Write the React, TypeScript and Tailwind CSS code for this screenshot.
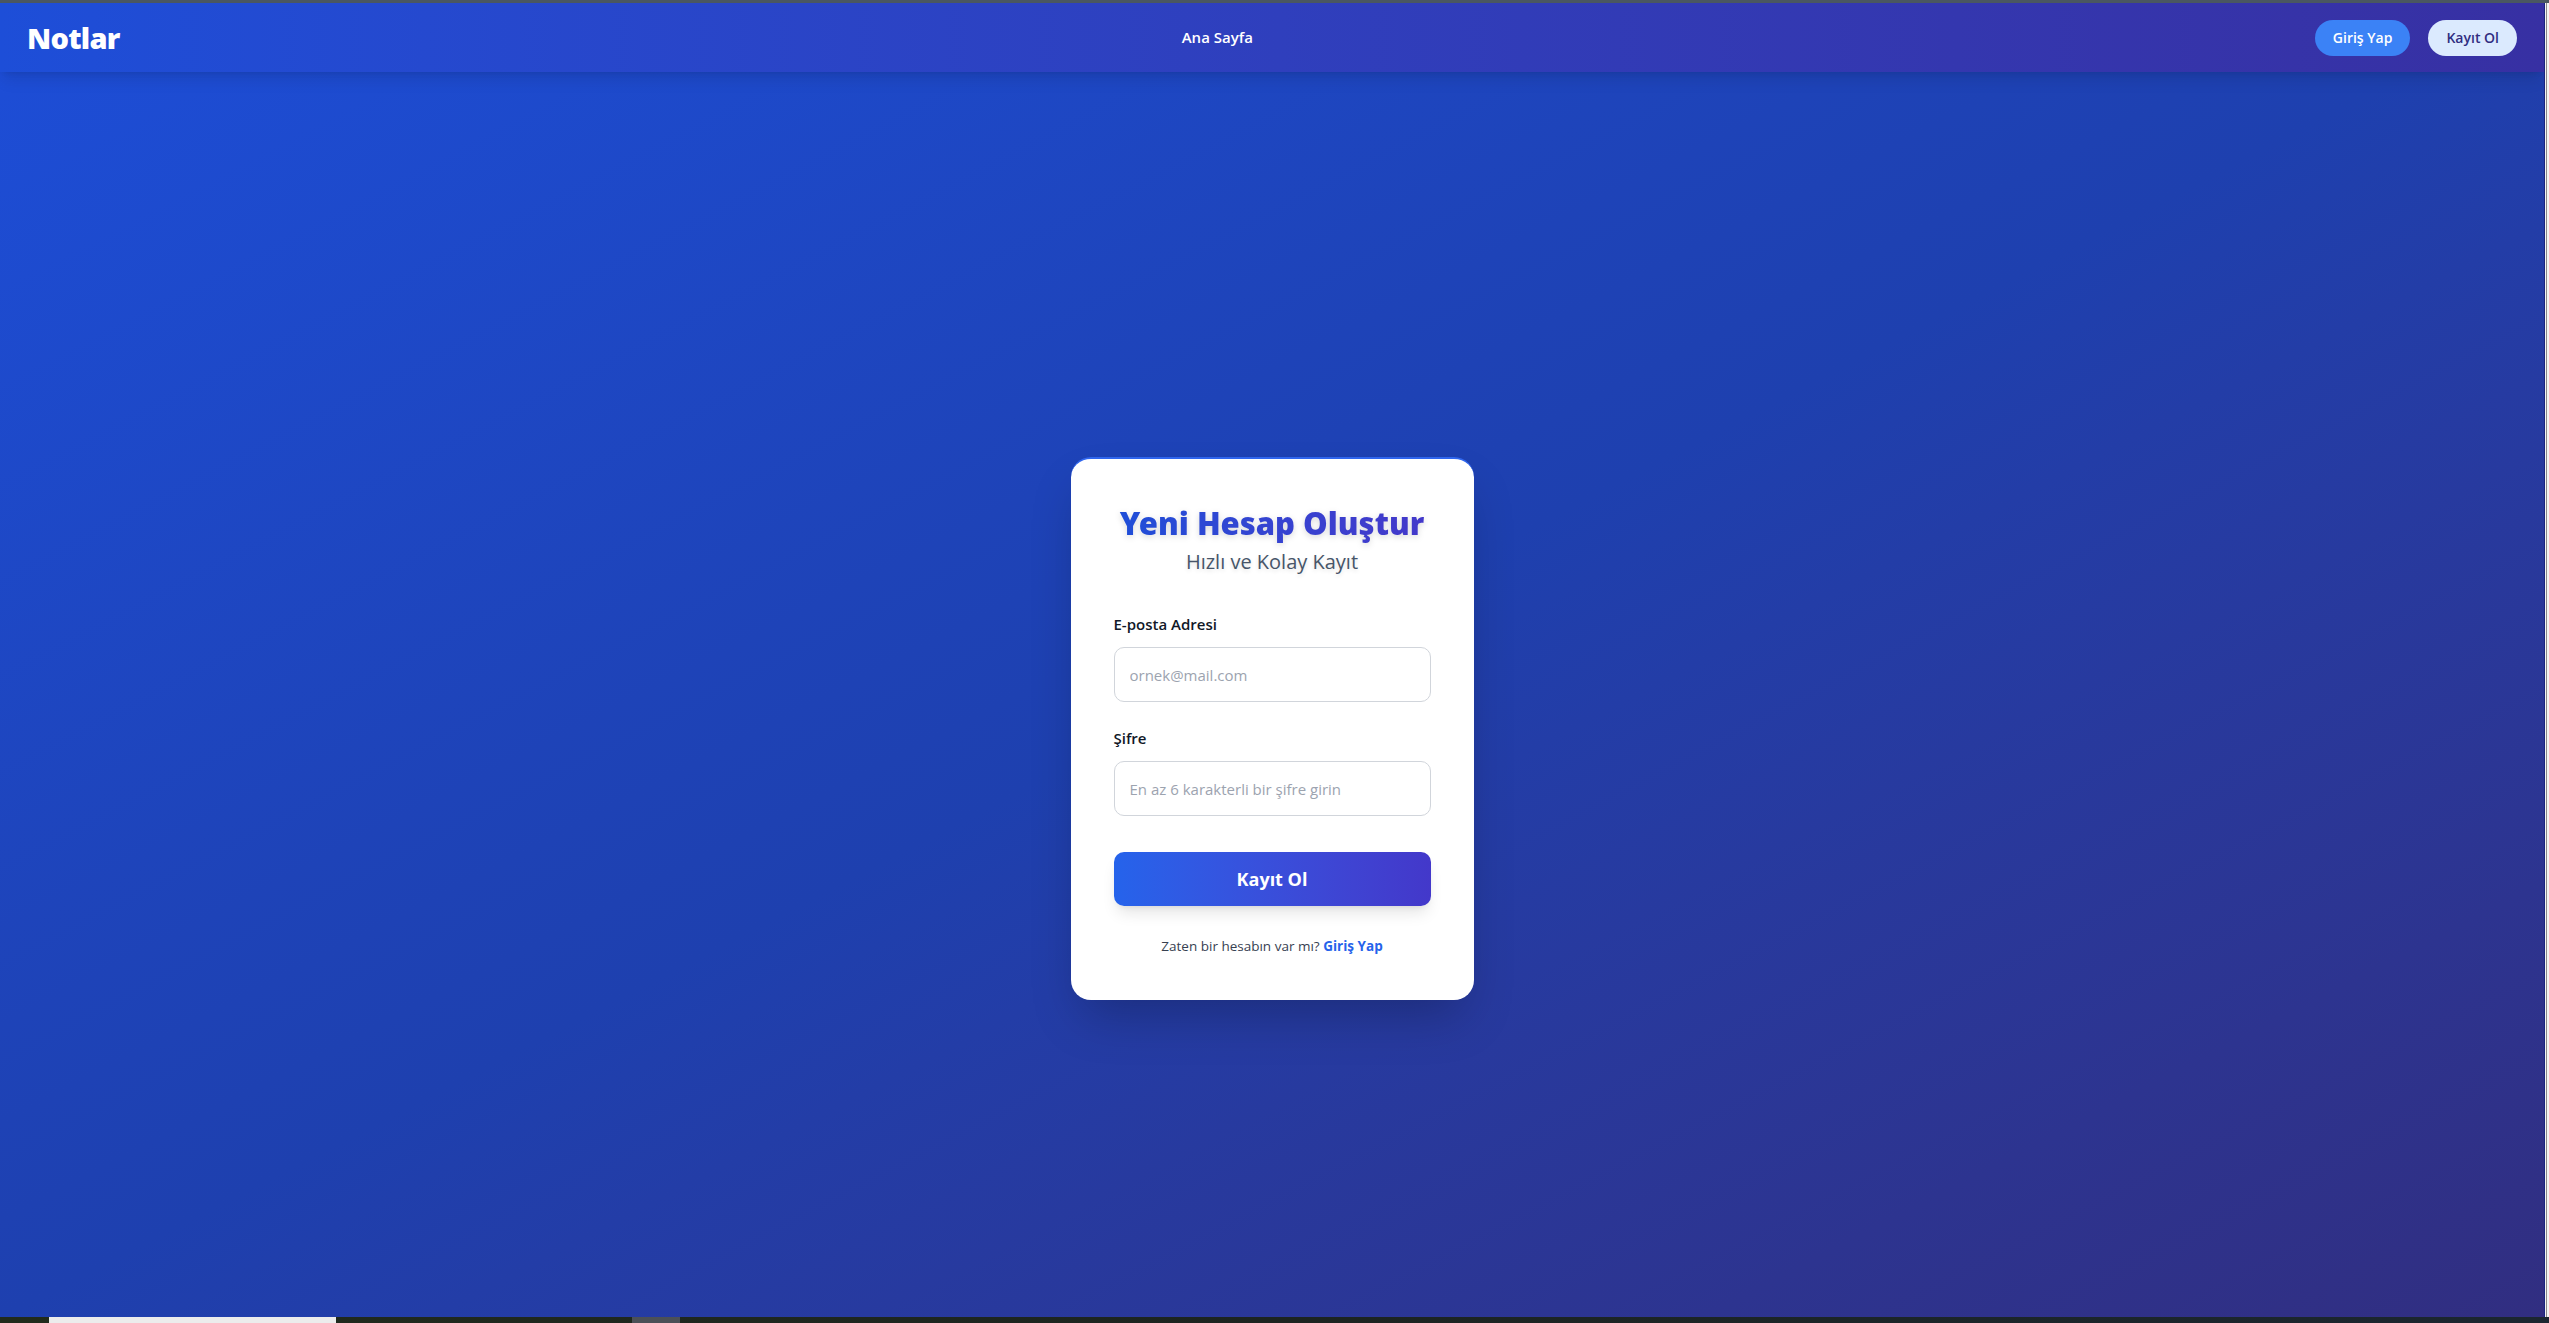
export default function App() {
  return (
    <div
      className="flex h-[1323px] w-[2549px] flex-col overflow-hidden bg-[#1b2520]"
      style={{ fontFamily: '"Open Sans", "Noto Sans", sans-serif' }}
    >
      {/* window chrome strip above the page */}
      <div className="h-[3px] shrink-0 bg-[#4a5761]" />

      <div className="flex min-h-0 flex-1">
        <div className="flex min-w-0 flex-1 flex-col overflow-hidden bg-gradient-to-br from-[#1d4ed8] via-[#1e40af] to-[#312e81]">
          <nav className="relative z-10 flex h-[69px] shrink-0 items-center justify-between bg-gradient-to-r from-[#1d4ed8] to-[#3730a3] px-[27px] shadow-lg">
            <span
              className="text-[29px] font-black tracking-tight text-white"
              style={{ fontFamily: '"Noto Sans", "Open Sans", sans-serif' }}
            >
              Notlar
            </span>
            <a href="/" className="text-[15px] font-semibold text-white">
              Ana Sayfa
            </a>
            <div className="flex items-center gap-[18px]">
              <button className="h-[36px] rounded-full bg-[#3b82f6] px-[18px] text-[14px] font-semibold text-white">
                Giriş Yap
              </button>
              <button className="h-[36px] rounded-full bg-[#dbeafe] px-[18px] text-[14px] font-semibold text-[#312e81]">
                Kayıt Ol
              </button>
            </div>
          </nav>

          <main className="flex h-[1313px] shrink-0 items-center justify-center">
            <div className="w-[403px] rounded-[20px] border-t-2 border-[#2f66ee] bg-white px-[43px] pb-[44px] pt-[44px] shadow-2xl">
              <div className="text-center">
                <h1
                  className="bg-gradient-to-r from-[#1d4ed8] to-[#4338ca] bg-clip-text text-[31px] font-black leading-[40px] text-transparent"
                  style={{ fontFamily: '"Noto Sans", "Open Sans", sans-serif', filter: "drop-shadow(0 2px 3px rgba(0,0,0,0.15))" }}
                >
                  Yeni Hesap Oluştur
                </h1>
                <p className="mt-[5px] text-[20px] leading-7 text-[#475569] [text-shadow:0_2px_4px_rgba(0,0,0,0.12)]">
                  Hızlı ve Kolay Kayıt
                </p>
              </div>

              <form className="mt-[38px]">
                <label className="block text-[15px] font-semibold leading-5 text-[#111827]">E-posta Adresi</label>
                <input
                  type="email"
                  placeholder="ornek@mail.com"
                  className="mt-[13px] block h-[55px] w-full rounded-[10px] border border-[#d1d5db] px-[15px] text-[15px] outline-none placeholder:text-[#9ca3af]"
                />

                <label className="mt-[26px] block text-[15px] font-semibold leading-5 text-[#111827]">Şifre</label>
                <input
                  type="password"
                  placeholder="En az 6 karakterli bir şifre girin"
                  className="mt-[13px] block h-[55px] w-full rounded-[10px] border border-[#d1d5db] px-[15px] text-[15px] outline-none placeholder:text-[#9ca3af]"
                />

                <button
                  type="button"
                  className="mt-[36px] block h-[54px] w-full rounded-[10px] bg-gradient-to-r from-[#2563eb] to-[#4338ca] text-[18px] font-bold text-white shadow-lg"
                >
                  Kayıt Ol
                </button>
              </form>

              <p className="mt-[30px] text-center text-[13.5px] leading-5 text-[#374151]">
                Zaten bir hesabın var mı?{" "}
                <a href="#" className="font-bold text-[#2563eb]">
                  Giriş Yap
                </a>
              </p>
            </div>
          </main>
        </div>

        {/* page scrollbar */}
        <div className="flex w-[5px] shrink-0 border-l border-[#1a237e] bg-[#f3f3f3]">
          <div className="ml-[1px] w-[1px] bg-[#8a8a8a]" />
        </div>
      </div>

      {/* taskbar strip below the page */}
      <div className="flex h-[6px] shrink-0 bg-gradient-to-r from-[#212b1c] via-[#1c2420] to-[#1b2630] pl-[49px]">
        <div className="w-[287px] bg-[#ececec]" />
        <div className="w-[296px]" />
        <div className="w-[48px] bg-[#4b5057]" />
      </div>
    </div>
  );
}
